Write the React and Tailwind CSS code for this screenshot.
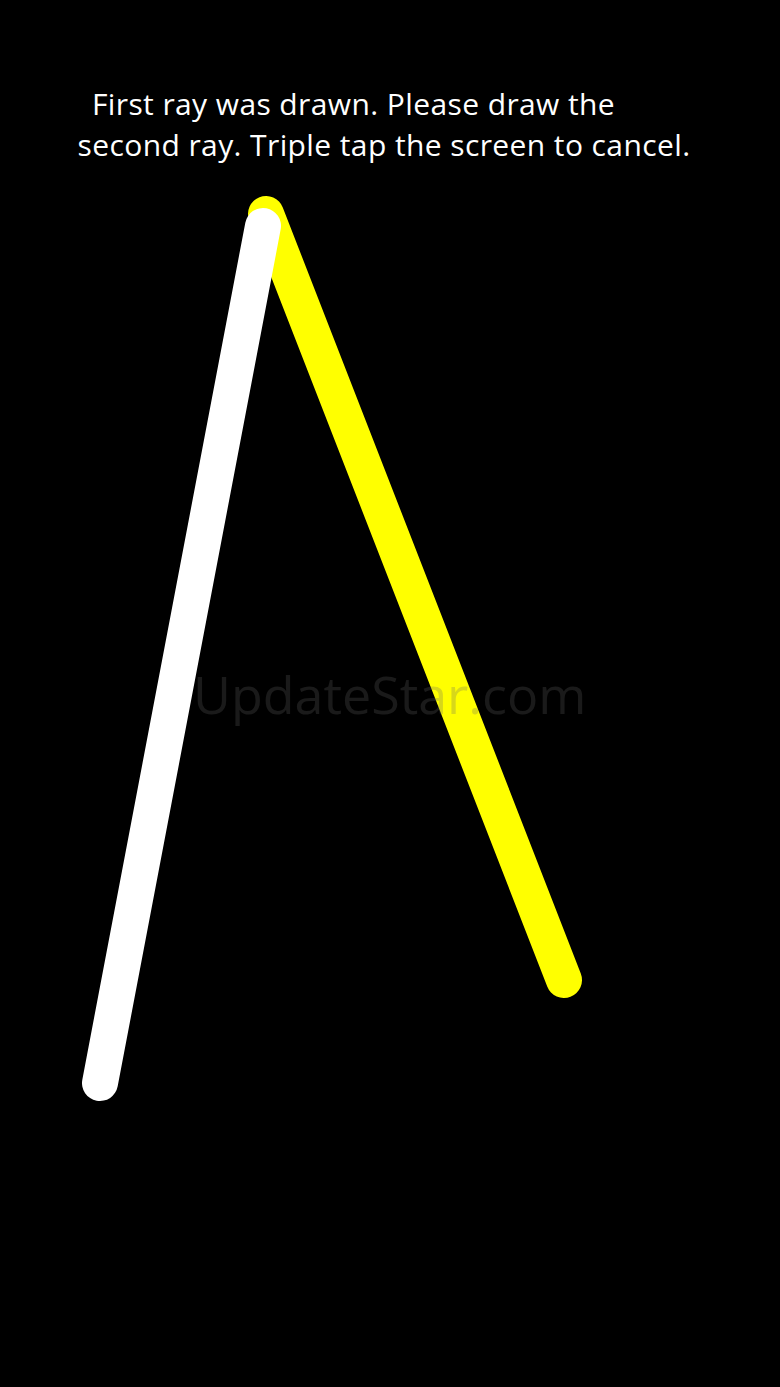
export default function App() {
  return (
    <div className="relative w-[780px] h-[1387px] bg-black overflow-hidden">
      <svg className="absolute inset-0" width="780" height="1387" viewBox="0 0 780 1387">
        <line x1="266" y1="214" x2="564" y2="980" stroke="#ffff00" strokeWidth="36" strokeLinecap="round" />
        <line x1="263" y1="226" x2="100" y2="1083" stroke="#ffffff" strokeWidth="36" strokeLinecap="round" />
      </svg>
      <div className="relative pt-[83px] pr-[12px] text-white text-[30px] leading-[41px] tracking-[0.4px] text-center" style={{ fontFamily: "'Open Sans', 'Noto Sans', sans-serif" }}>
        <div className="pr-[61px]">First ray was drawn. Please draw the</div>
        <div>second ray. Triple tap the screen to cancel.</div>
      </div>
      <div className="absolute left-[193px] top-[668px] text-[52px] leading-none text-[#64646442] select-none" style={{ fontFamily: "'Open Sans', 'Noto Sans', sans-serif" }}>
        UpdateStar.com
      </div>
    </div>
  );
}
